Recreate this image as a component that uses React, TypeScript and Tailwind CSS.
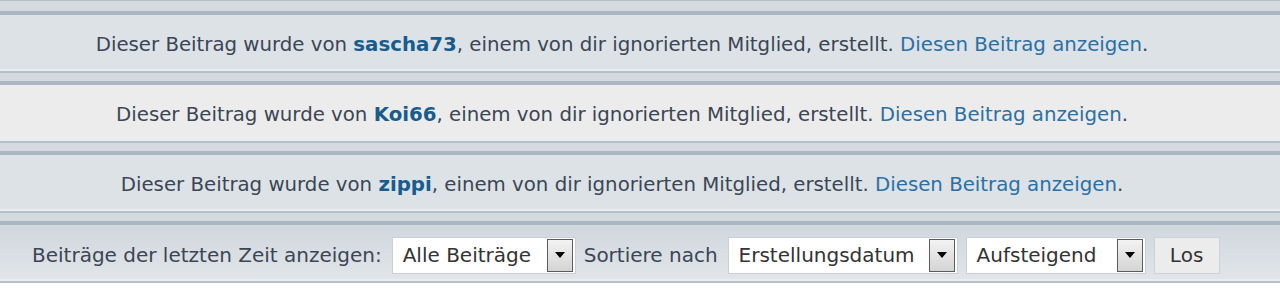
const font = { fontFamily: '"DejaVu Sans", Verdana, sans-serif' };

function IgnoredPost({ user, alt }: { user: string; alt?: boolean }) {
  return (
    <div>
      <div className="h-[4px] bg-[#aab6c1]" />
      <div
        className={`h-[54px] flex items-center justify-center pt-[6px] pr-[36px] text-[19.75px] text-[#3b4655] ${
          alt ? "bg-[#ececec]" : "bg-[#dde2e7]"
        }`}
      >
        <span>
          Dieser Beitrag wurde von{" "}
          <a className="font-bold text-[#185c8d]">{user}</a>, einem von dir ignorierten Mitglied,
          erstellt. <a className="text-[#2a70a5]">Diesen Beitrag anzeigen</a>.
        </span>
      </div>
      <div className="h-[2px] bg-[#e9edf0]" />
      <div className="h-[2px] bg-[#b7c1ca]" />
      <div className="h-[8px] bg-[#d4dae0]" />
    </div>
  );
}

function Select({ value, width }: { value: string; width: string }) {
  return (
    <div
      className={`${width} h-[37px] bg-white border border-[#c8cfd6] flex items-center justify-between pl-[10px] pr-[2px]`}
    >
      <span className="text-[#333]">{value}</span>
      <div className="w-[26px] h-[33px] border border-[#5b5b5b] bg-gradient-to-b from-[#f3f3f3] to-[#d4d4d4] flex items-center justify-center">
        <svg width="10" height="6" viewBox="0 0 10 6">
          <path d="M0 0h10L5 6z" fill="#000" />
        </svg>
      </div>
    </div>
  );
}

export default function App() {
  return (
    <div className="w-[1280px] h-[299px] bg-white" style={font}>
      <div className="h-[1px] bg-[#b5bfc8]" />
      <div className="h-[10px] bg-[#d4dae0]" />
      <IgnoredPost user="sascha73" />
      <IgnoredPost user="Koi66" alt />
      <IgnoredPost user="zippi" />
      <div className="h-[4px] bg-[#aab6c1]" />
      <div className="h-[54px] bg-gradient-to-b from-[#d0d7de] to-[#e1e5e9] flex items-center pt-[6px] pl-[32px] text-[20px] text-[#3b4655]">
        <span>Beiträge der letzten Zeit anzeigen:</span>
        <div className="ml-[10px]">
          <Select value="Alle Beiträge" width="w-[184px]" />
        </div>
        <span className="ml-[8px]">Sortiere nach</span>
        <div className="ml-[10px]">
          <Select value="Erstellungsdatum" width="w-[230px]" />
        </div>
        <div className="ml-[8px]">
          <Select value="Aufsteigend" width="w-[180px]" />
        </div>
        <button className="ml-[8px] w-[66px] h-[37px] bg-[#ececec] border border-[#cbd2d8] text-[#333]">
          Los
        </button>
      </div>
      <div className="h-[2px] bg-[#e9edf0]" />
      <div className="h-[2px] bg-[#b7c1ca]" />
    </div>
  );
}
